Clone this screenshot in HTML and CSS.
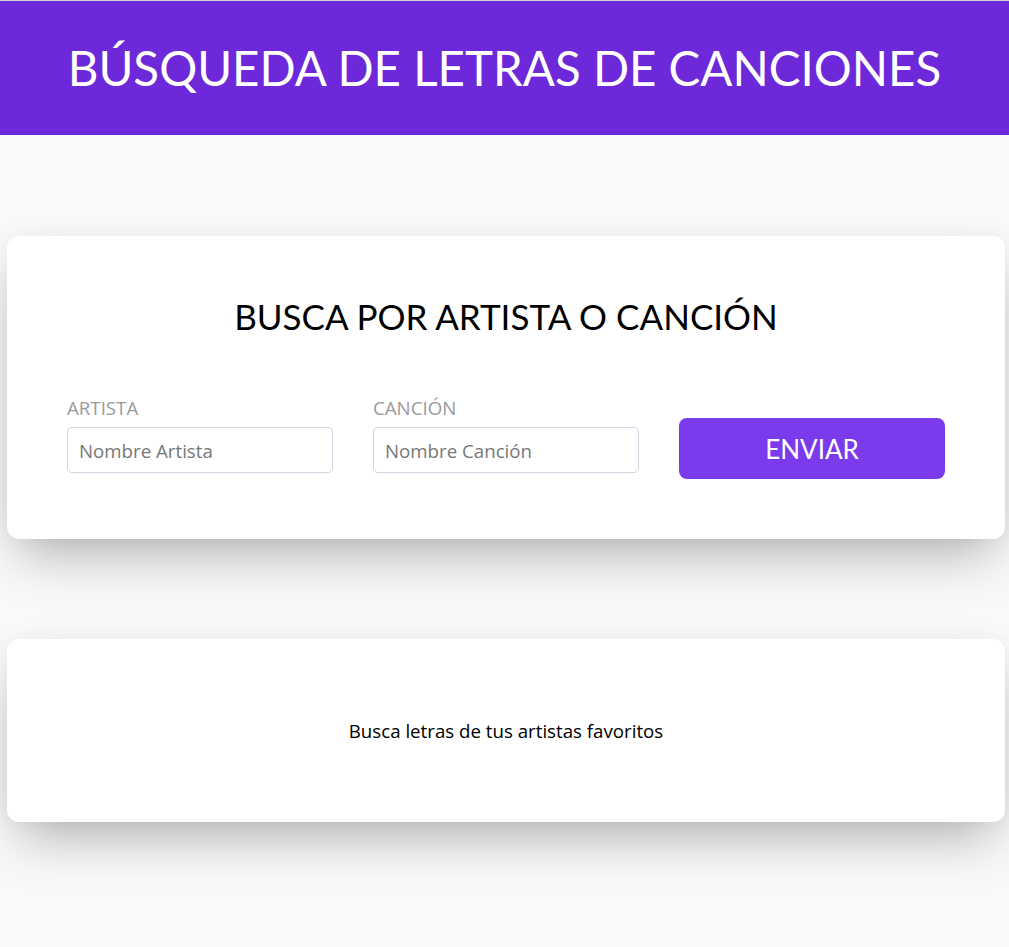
FILE: index.html
```html
<!DOCTYPE html>
<html lang="es">
<head>
<meta charset="utf-8">
<title>Búsqueda de letras de canciones</title>
<link rel="stylesheet" href="styles.css">
</head>
<body>
<header class="site-header">
  <h1 class="site-title">BÚSQUEDA DE LETRAS DE CANCIONES</h1>
</header>
<main class="content">
  <section class="card search-card">
    <h2 class="card-title">BUSCA POR ARTISTA O CANCIÓN</h2>
    <form class="search-form">
      <div class="field">
        <label class="field-label" for="artista">ARTISTA</label>
        <input class="field-input" id="artista" type="text" placeholder="Nombre Artista">
      </div>
      <div class="field">
        <label class="field-label" for="cancion">CANCIÓN</label>
        <input class="field-input" id="cancion" type="text" placeholder="Nombre Canción">
      </div>
      <button class="submit-btn" type="button">ENVIAR</button>
    </form>
  </section>
  <section class="card result-card">
    <p class="result-text">Busca letras de tus artistas favoritos</p>
  </section>
</main>
</body>
</html>
```

FILE: styles.css
```css
* { box-sizing: border-box; }
html, body { margin: 0; padding: 0; }
body {
  background: #f9f9f9;
  font-family: "Open Sans", "Noto Sans", sans-serif;
  border-top: 1px solid #d4d4d4;
  min-height: 947px;
}
.site-header {
  background: #6d28d9;
  height: 134px;
  display: flex;
  align-items: center;
  justify-content: center;
}
.site-title {
  margin: 0;
  color: #fff;
  font-family: "Lato", sans-serif;
  font-weight: 400;
  font-size: 47.5px;
  letter-spacing: 0;
  line-height: 1;
}
.content {
  padding: 101px 4px 0 7px;
  display: flex;
  flex-direction: column;
  gap: 100px;
}
.card {
  background: #fff;
  border-radius: 12px;
  box-shadow: 0 25px 50px -12px rgba(0,0,0,0.3), 0 0 20px rgba(0,0,0,0.04);
}
.search-card {
  padding: 60px;
  height: 303px;
}
.card-title {
  margin: 0 0 60px;
  text-align: center;
  font-family: "Lato", sans-serif;
  font-weight: 400;
  font-size: 35px;
  line-height: 40px;
  color: #000;
}
.search-form {
  display: grid;
  grid-template-columns: repeat(3, 1fr);
  column-gap: 40px;
  align-items: start;
}
.field { display: flex; flex-direction: column; }
.field-label {
  color: #9a9a9a;
  font-size: 18.7px;
  line-height: 24px;
  margin-bottom: 7px;
}
.field-input {
  height: 46px;
  border: 1px solid #cbd5e1;
  border-radius: 5px;
  padding: 0 11px;
  font-family: "Open Sans", "Noto Sans", sans-serif;
  font-size: 18.7px;
  color: #333;
}
.field-input::placeholder { color: #777; }
.submit-btn {
  margin-top: 22px;
  height: 61px;
  border: 0;
  border-radius: 8px;
  background: #7c3aed;
  color: #fff;
  font-family: "Lato", sans-serif;
  font-size: 26px;
}
.result-card {
  height: 183px;
  display: flex;
  align-items: center;
  justify-content: center;
}
.result-text {
  margin: 0;
  font-size: 18.7px;
  color: #000;
}
```
